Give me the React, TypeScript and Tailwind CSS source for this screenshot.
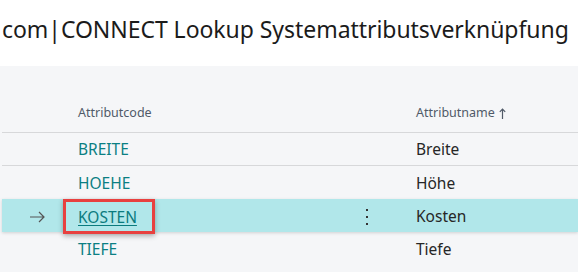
const rows = [
  { code: "BREITE", name: "Breite" },
  { code: "HOEHE", name: "Höhe" },
  { code: "KOSTEN", name: "Kosten", selected: true },
  { code: "TIEFE", name: "Tiefe" },
];

export default function App() {
  return (
    <div className="h-[272px] w-[578px] overflow-hidden bg-white font-['Noto_Sans',sans-serif]">
      <div className="h-[66px] pl-[2px] pt-[13px]">
        <h1 className="whitespace-nowrap text-[23px] leading-[32px] tracking-[-0.05px] text-[#1b1b1b]">
          com|CONNECT Lookup Systemattributsverknüpfung
        </h1>
      </div>
      <div className="h-[206px] bg-[#f5f6f8] pl-[2px]">
        <div className="grid h-[67px] grid-cols-[61px_262px_84px_1fr] items-end border-b border-[#d7d8da] pb-[9px]">
          <div />
          <div className="pl-[15px] text-[12.5px] text-[#505a68]">Attributcode</div>
          <div />
          <div className="flex items-center gap-[4px] pl-[7px] text-[12.5px] text-[#505a68]">
            Attributname
            <svg width="7" height="11" viewBox="0 0 7 11" fill="none" stroke="#505a68" strokeWidth="1.2">
              <path d="M3.5 1v10M0.8 3.8L3.5 1l2.7 2.8" />
            </svg>
          </div>
        </div>
        {rows.map((r, i) => (
          <div
            key={r.code}
            className={
              "grid h-[33px] grid-cols-[61px_262px_84px_1fr] items-center pt-[2px] text-[15.5px] " +
              (r.selected
                ? "bg-[#b1e7ea] shadow-[0_1px_3px_rgba(0,0,0,0.15)]"
                : i < 1
                  ? "border-b border-[#d7d8da]"
                  : "")
            }
          >
            <div className="flex justify-center pl-[8px] text-[#444]">
              {r.selected && (
                <svg width="16" height="12" viewBox="0 0 16 12" fill="none" stroke="#555" strokeWidth="1.2">
                  <path d="M1 6h14M10 1l5 5-5 5" />
                </svg>
              )}
            </div>
            <div className="relative h-full">
              {r.selected ? (
                <div className="absolute left-0 top-[-2px] flex h-[35px] w-[92px] items-center border-[3px] border-[#e8403f] pl-[12px] pt-[2px] shadow-[0_2px_5px_rgba(0,0,0,0.3)]">
                  <span className="text-[#0b7b7e] underline underline-offset-2">{r.code}</span>
                </div>
              ) : (
                <div className="flex h-full items-center pl-[15px] text-[#0b7f83]">{r.code}</div>
              )}
            </div>
            <div className="flex justify-center">
              {r.selected && (
                <div className="flex flex-col gap-[5px]">
                  <span className="h-[2px] w-[2px] bg-[#333]" />
                  <span className="h-[2px] w-[2px] bg-[#333]" />
                  <span className="h-[2px] w-[2px] bg-[#333]" />
                </div>
              )}
            </div>
            <div className="pl-[7px] text-[#262626]">{r.name}</div>
          </div>
        ))}
      </div>
    </div>
  );
}
